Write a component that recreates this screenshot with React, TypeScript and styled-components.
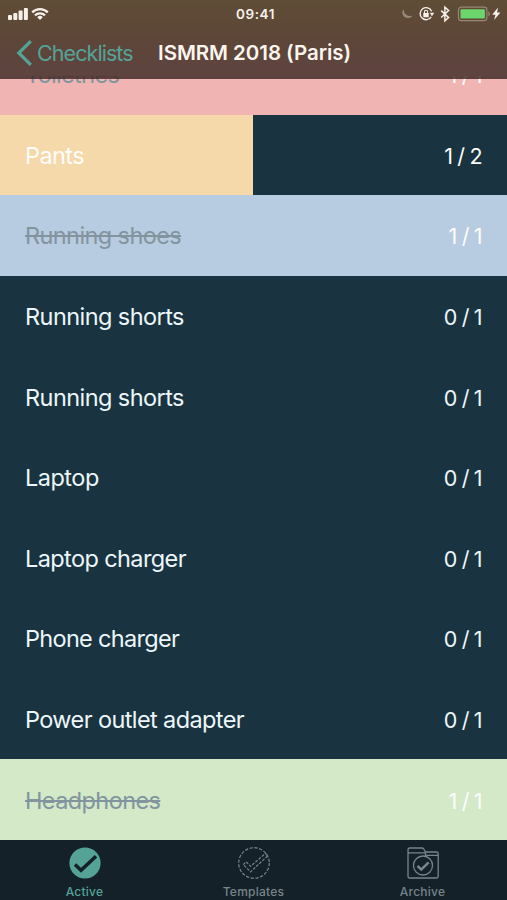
import React from "react";
import styled, { createGlobalStyle } from "styled-components";

const GlobalStyle = createGlobalStyle`
  * { box-sizing: border-box; }
  body { margin: 0; background: #193440; overflow: hidden; }
`;

const Screen = styled.div`
  display: flex;
  flex-direction: column;
  width: 507px;
  height: 900px;
  overflow: hidden;
  background: #193440;
  font-family: Inter, "Liberation Sans", sans-serif;
`;

const Header = styled.header`
  position: relative;
  z-index: 1;
  flex: none;
  height: 79px;
  background: linear-gradient(#5f4d36 0, #5d4638 38px, #5e433f 76px, rgba(60, 38, 35, 0.81) 76px, rgba(60, 38, 35, 0.81) 79px);
`;

const StatusBar = styled.div`
  display: grid;
  grid-template-columns: 1fr auto 1fr;
  align-items: center;
  height: 27px;
  padding: 0 4px 0 8px;
  color: #f7f1e9;
`;

const Signals = styled.div`
  display: flex;
  align-items: center;
  gap: 3px;
`;

const Clock = styled.time`
  font-size: 13.5px;
  font-weight: 600;
  letter-spacing: 0.6px;
`;

const Indicators = styled.div`
  display: flex;
  align-items: center;
  justify-content: flex-end;
`;

const NavBar = styled.nav`
  display: flex;
  align-items: center;
  height: 51px;
  padding-left: 16px;
`;

const BackButton = styled.button`
  display: flex;
  align-items: center;
  gap: 4px;
  width: 142px;
  padding: 0;
  border: 0;
  background: none;
  color: #55a397;
  font: 400 21.5px/28px Inter, sans-serif;
  letter-spacing: -0.93px;
  white-space: nowrap;
`;

const Title = styled.h1`
  margin: 0;
  color: #fbf5ee;
  font-size: 20.5px;
  line-height: 28px;
  font-weight: 600;
  letter-spacing: -0.05px;
  white-space: nowrap;
`;

const List = styled.ul`
  flex: none;
  height: 806px;
  margin: -45.1px 0 0;
  padding: 0;
  list-style: none;
`;

const Row = styled.li<{ $tint?: string; $progress: number }>`
  display: flex;
  align-items: center;
  justify-content: space-between;
  height: 80.6px;
  padding: 2px 24.5px 0 25px;
  color: ${({ $tint }) => ($tint ? "#fdfdfb" : "#edf7fb")};
  background: ${({ $tint, $progress }) =>
    $tint ? `linear-gradient(90deg, ${$tint} ${$progress}%, #193440 ${$progress}%)` : "#193440"};
`;

const ItemName = styled.span<{ $done: boolean; $tracking: number }>`
  font-size: 23.5px;
  line-height: 30px;
  letter-spacing: ${({ $tracking }) => $tracking}px;
  color: ${({ $done }) => ($done ? "#82959f" : "inherit")};
  text-decoration: ${({ $done }) => ($done ? "line-through" : "none")};
  text-decoration-thickness: 2px;
`;

const Count = styled.span`
  font-size: 21.5px;
  line-height: 30px;
  letter-spacing: 0;
  word-spacing: -1.7px;
`;

const TabBar = styled.footer`
  display: grid;
  grid-template-columns: repeat(3, 1fr);
  flex: 1;
  background: #142128;
`;

const Tab = styled.button<{ $active?: boolean }>`
  display: flex;
  flex-direction: column;
  align-items: center;
  gap: 5px;
  padding: 7px 0 0;
  border: 0;
  background: none;
  color: ${({ $active }) => ($active ? "#55a397" : "#77858a")};
  font: 500 12px/15px Inter, sans-serif;
  letter-spacing: 0.25px;
`;

type Item = { name: string; done: number; total: number; tint?: string; tracking: number };

const items: Item[] = [
  { name: "Toiletries", done: 1, total: 1, tint: "#f0b5b2", tracking: -0.7 },
  { name: "Pants", done: 1, total: 2, tint: "#f6d9aa", tracking: -0.6 },
  { name: "Running shoes", done: 1, total: 1, tint: "#b8cce1", tracking: -0.6 },
  { name: "Running shorts", done: 0, total: 1, tracking: -0.57 },
  { name: "Running shorts", done: 0, total: 1, tracking: -0.57 },
  { name: "Laptop", done: 0, total: 1, tracking: -0.5 },
  { name: "Laptop charger", done: 0, total: 1, tracking: -0.6 },
  { name: "Phone charger", done: 0, total: 1, tracking: -0.7 },
  { name: "Power outlet adapter", done: 0, total: 1, tracking: -0.6 },
  { name: "Headphones", done: 1, total: 1, tint: "#d3e9c7", tracking: -0.6 },
];

const SignalIcon = () => (
  <svg width="20" height="14" viewBox="0 0 20 14" fill="currentColor">
    <rect x="0" y="8" width="4" height="5" rx="1" />
    <rect x="5.3" y="6" width="4" height="7" rx="1" />
    <rect x="10.6" y="3.5" width="4" height="9.5" rx="1" />
    <rect x="15.9" y="1" width="4" height="12" rx="1" />
  </svg>
);

const WifiIcon = () => (
  <svg width="18" height="14" viewBox="0 0 18 14" fill="none" stroke="currentColor" strokeWidth="2.2">
    <path d="M1.2 5.4a11 11 0 0 1 15.6 0M4 8.4a7.1 7.1 0 0 1 10 0" />
    <path d="M9 13 6.2 10.2a4 4 0 0 1 5.6 0Z" fill="currentColor" stroke="none" />
  </svg>
);

const StatusIcons = () => (
  <svg width="102" height="18" viewBox="0 0 102 18" fill="none">
    <path d="M2.8 3.9a5.5 5.5 0 1 0 8.8 6.5A6.2 6.2 0 0 1 2.8 3.9Z" fill="#96897a" />
    <path d="M30.2 11.9a6 6 0 1 1 .4-5.7" stroke="#f7f1e9" strokeWidth="1.4" />
    <path d="m28.7 7.7 4.6.1-2.4 3.5z" fill="#f7f1e9" />
    <rect x="22.3" y="8" width="5.4" height="4.3" rx=".6" fill="#f7f1e9" />
    <path d="M23.4 8V6.9a1.6 1.6 0 0 1 3.2 0V8" stroke="#f7f1e9" strokeWidth="1.1" />
    <path d="m40.2 5.6 7.4 7-3.7 3.3V2.1l3.7 3.4-7.4 7" stroke="#f7f1e9" strokeWidth="1.5" />
    <rect x="57.5" y="2.2" width="28.4" height="13.4" rx="2.8" stroke="#968777" strokeWidth="1.2" />
    <rect x="59.5" y="4.2" width="24.4" height="9.4" rx="1" fill="#6bd66c" />
    <path d="M87.3 6.5c2 .6 2 4.3 0 5z" fill="#968777" />
    <path d="m97 2.5-5.8 7.2h3.3L93.1 15l6.3-7.4H96z" fill="#f7f1e9" />
  </svg>
);

const BackIcon = () => (
  <svg width="17" height="28" viewBox="0 0 17 28" fill="none" stroke="currentColor" strokeWidth="3.2">
    <path d="M14.8 2.2 2.8 14l12 11.8" />
  </svg>
);

const ActiveIcon = () => (
  <svg width="32" height="32" viewBox="0 0 32 32">
    <circle cx="16" cy="16" r="15.6" fill="#55a397" />
    <path d="m6 17.5 6 5.8L27 9.2" fill="none" stroke="#142128" strokeWidth="3.6" />
  </svg>
);

const TemplatesIcon = () => (
  <svg width="32" height="32" viewBox="0 0 32 32" fill="none" stroke="currentColor" strokeWidth="1.2">
    <circle cx="16" cy="16" r="15.3" strokeDasharray="3.3 1.5" />
    <path d="m5.3 17.6 2.8-2.8 4.5 4.5L27.4 6.4l2.3 2.5-17.1 15.9z" strokeDasharray="2.8 1.4" />
  </svg>
);

const ArchiveIcon = () => (
  <svg width="32" height="32" viewBox="0 0 32 32" fill="none" stroke="currentColor" strokeWidth="1.3">
    <path d="M1 7V2.8Q1 1 2.8 1h12.4q1.2 0 1.8 1.2L18.5 5h11q1.7 0 1.7 1.7v22.5q0 1.8-1.8 1.8H2.8Q1 31 1 29.2V7Q1 5.8 2.5 5.8h16M18.5 5.2v3.2h12.7" />
    <circle cx="16" cy="18.5" r="9.5" />
    <path d="m10.5 19 3.8 3.5 7.4-7.2" strokeWidth="2.5" />
  </svg>
);

export default function App() {
  return (
    <>
      <GlobalStyle />
      <Screen>
        <Header>
          <StatusBar>
            <Signals><SignalIcon /><WifiIcon /></Signals>
            <Clock>09:41</Clock>
            <Indicators><StatusIcons /></Indicators>
          </StatusBar>
          <NavBar>
            <BackButton><BackIcon />Checklists</BackButton>
            <Title>ISMRM 2018 (Paris)</Title>
          </NavBar>
        </Header>
        <List>
          {items.map((item, index) => (
            <Row key={index} $tint={item.tint} $progress={(item.done / item.total) * 100}>
              <ItemName $done={item.done === item.total} $tracking={item.tracking}>{item.name}</ItemName>
              <Count>{item.done} / {item.total}</Count>
            </Row>
          ))}
        </List>
        <TabBar>
          <Tab $active><ActiveIcon />Active</Tab>
          <Tab><TemplatesIcon />Templates</Tab>
          <Tab><ArchiveIcon />Archive</Tab>
        </TabBar>
      </Screen>
    </>
  );
}
